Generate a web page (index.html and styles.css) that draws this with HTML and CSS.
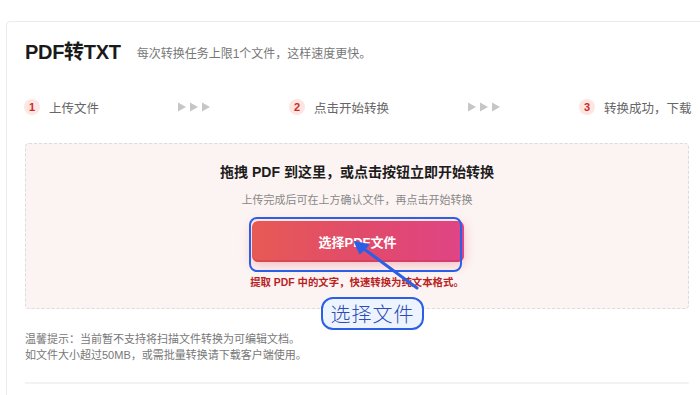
FILE: index.html
```html
<!DOCTYPE html>
<html lang="zh-CN">
<head>
<meta charset="utf-8">
<title>PDF转TXT</title>
<link rel="stylesheet" href="styles.css">
</head>
<body>
<div class="card">
  <div class="header">
    <h1 class="title">PDF转TXT</h1>
    <span class="subtitle">每次转换任务上限1个文件，这样速度更快。</span>
  </div>
  <div class="steps">
    <div class="step"><span class="badge">1</span><span class="step-text">上传文件</span></div>
    <div class="arrows">
      <svg width="32" height="10" viewBox="0 0 32 10"><path d="M0 0.5L8 5L0 9.5Z M12 0.5L20 5L12 9.5Z M24 0.5L32 5L24 9.5Z" fill="#c6c6c6"/></svg>
    </div>
    <div class="step"><span class="badge">2</span><span class="step-text">点击开始转换</span></div>
    <div class="arrows">
      <svg width="32" height="10" viewBox="0 0 32 10"><path d="M0 0.5L8 5L0 9.5Z M12 0.5L20 5L12 9.5Z M24 0.5L32 5L24 9.5Z" fill="#c6c6c6"/></svg>
    </div>
    <div class="step"><span class="badge">3</span><span class="step-text">转换成功，下载</span></div>
  </div>
  <div class="dropzone">
    <div class="drop-title">拖拽 PDF 到这里，或点击按钮立即开始转换</div>
    <div class="drop-sub">上传完成后可在上方确认文件，再点击开始转换</div>
    <button class="select-btn">选择PDF文件</button>
    <div class="drop-note">提取 PDF 中的文字，快速转换为纯文本格式。</div>

    <div class="hl-box"></div>
    <svg class="hl-arrow" width="80" height="60" viewBox="0 0 80 60">
      <path d="M73 55L16 13" stroke="#2b5fe6" stroke-width="3" fill="none" stroke-linecap="round"/>
      <path d="M11 9L24 12L16 20Z" fill="#2b5fe6" stroke="#2b5fe6" stroke-width="2" stroke-linejoin="round"/>
    </svg>
    <div class="hl-label">选择文件</div>
  </div>
  <div class="tips">
    <p>温馨提示：当前暂不支持将扫描文件转换为可编辑文档。</p>
    <p>如文件大小超过50MB，或需批量转换请下载客户端使用。</p>
  </div>
  <div class="divider"></div>
</div>
</body>
</html>
```

FILE: styles.css
```css
* { box-sizing: border-box; }
html, body {
  margin: 0;
  padding: 0;
  overflow: hidden;
  background: #fff;
  font-family: "Liberation Sans", "Noto Sans CJK SC", sans-serif;
}
.card {
  margin: 21px 0 0 6px;
  width: 702px;
  border: 1px solid #ececec;
  border-radius: 4px;
  padding: 16px 18px 20px;
}
.header {
  display: flex;
  align-items: center;
  height: 28px;
}
.title {
  margin: 0;
  font-size: 20px;
  font-weight: bold;
  color: #1a1a1a;
  line-height: 28px;
  letter-spacing: -0.3px;
}
.subtitle {
  margin-left: 16px;
  font-size: 12px;
  color: #777;
  padding-top: 1px;
}
.steps {
  display: flex;
  align-items: center;
  gap: 79px;
  margin-top: 31px;
  height: 20px;
  margin-left: -1px;
  white-space: nowrap;
}
.step {
  display: flex;
  align-items: center;
}
.badge {
  width: 16px;
  height: 16px;
  border-radius: 50%;
  background: #fde6e1;
  color: #cf2b26;
  font-size: 11px;
  font-weight: bold;
  display: flex;
  align-items: center;
  justify-content: center;
}
.step-text {
  margin-left: 9px;
  font-size: 12.5px;
  color: #666;
}
.arrows {
  display: flex;
  align-items: center;
}
.dropzone {
  position: relative;
  margin-top: 26px;
  width: 664px;
  height: 166px;
  border: 1px dashed #dcdcdc;
  border-radius: 4px;
  background: #fcf4f3;
  display: flex;
  flex-direction: column;
  align-items: center;
  padding-top: 18px;
}
.drop-title {
  font-size: 14px;
  font-weight: bold;
  color: #1c1c1c;
  line-height: 20px;
}
.drop-sub {
  margin-top: 10px;
  font-size: 11px;
  color: #888;
  line-height: 16px;
}
.select-btn {
  margin-top: 13px;
  width: 212px;
  height: 41px;
  border: none;
  border-radius: 6px;
  background: linear-gradient(90deg, #e65a55 0%, #e14a6c 55%, #df4486 100%);
  box-shadow: 0 3px 12px rgba(232, 80, 100, 0.35), inset 0 -2px 0 rgba(180, 30, 60, 0.25);
  color: #fff;
  font-family: "Liberation Sans", "Noto Sans CJK SC", sans-serif;
  font-size: 13px;
  font-weight: bold;
  margin-left: 1px;
}
.drop-note {
  margin-top: 14px;
  font-size: 10.4px;
  font-weight: bold;
  color: #b9231f;
  line-height: 14px;
}
.hl-box {
  position: absolute;
  left: 223px;
  top: 73px;
  width: 213px;
  height: 55px;
  border: 2px solid #2b5fe6;
  border-radius: 8px;
}
.hl-arrow {
  position: absolute;
  left: 318px;
  top: 89px;
}
.hl-label {
  position: absolute;
  left: 295px;
  top: 153px;
  width: 103px;
  height: 33px;
  border: 2px solid #2b5fe6;
  border-radius: 12px;
  background: #eef4ff;
  color: #2c4cb5;
  font-size: 20px;
  line-height: 29px;
  text-align: center;
  letter-spacing: 1px;
  font-family: "Noto Sans CJK SC", sans-serif;
  font-weight: 300;
}
.tips {
  margin-top: 22px;
  font-size: 11px;
  color: #777;
  line-height: 16px;
}
.tips p { margin: 0; }
.divider {
  margin-top: 19px;
  width: 664px;
  height: 2px;
  background: #f3f3f3;
}
```
